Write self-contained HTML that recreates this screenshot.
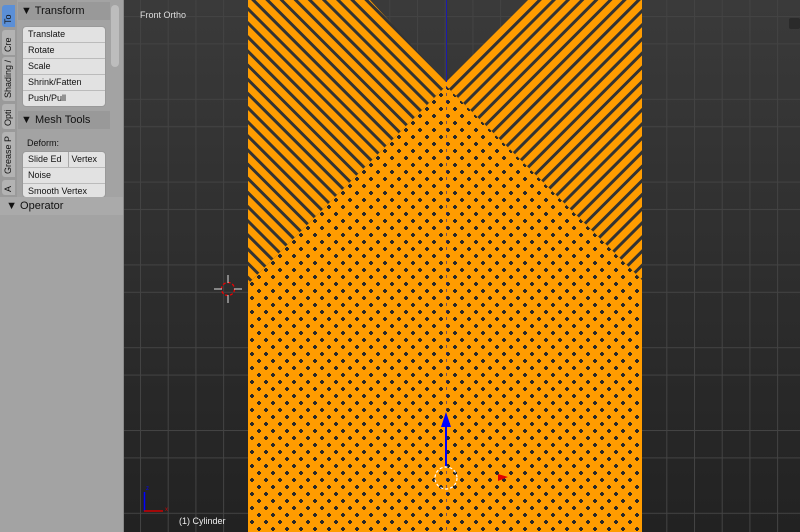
<!DOCTYPE html>
<html><head><meta charset="utf-8"><style>
body{margin:0;width:800px;height:532px;overflow:hidden;background:#333;font-family:"Liberation Sans",sans-serif}
#vp{position:absolute;left:0;top:0}
#panel{position:absolute;left:0;top:0;width:123px;height:532px;background:#a3a3a3;border-right:1px solid #8a8a8a}
.tabs{position:absolute;left:0;top:0;width:17px;height:200px;background:#9a9a9a}
.tab{position:absolute;left:2px;width:13px;background:#b3b3b3;border-radius:3px 0 0 3px;font-size:9px;color:#111;overflow:hidden}
.tab span{position:absolute;bottom:3px;transform:rotate(-90deg);transform-origin:left bottom;white-space:nowrap;left:11px}
.hdr{position:absolute;left:18px;width:92px;height:18px;background:#999;font-size:11px;color:#111;line-height:18px}
.btns{position:absolute;left:22px;width:82px;background:#e2e2e2;border-radius:4px;border:1px solid #999;font-size:9px;color:#111}
.btns div{height:15px;line-height:15px;padding-left:5px;border-bottom:1px solid #bbb}
</style></head><body>
<svg id="vp" width="800" height="532">
<defs>
<linearGradient id="bg" x1="0" y1="0" x2="0" y2="1"><stop offset="0" stop-color="#3a3a3a"/><stop offset="1" stop-color="#222"/></linearGradient>
<pattern id="gh" width="800" height="82.8" patternUnits="userSpaceOnUse" y="16"><rect width="800" height="1" fill="#434343"/><rect y="27.4" width="800" height="1" fill="#434343"/></pattern>
<pattern id="gv" width="27.7" height="600" patternUnits="userSpaceOnUse" x="1.5"><rect width="1" height="600" fill="#434343"/></pattern>
<pattern id="dots" width="14" height="14" patternUnits="userSpaceOnUse" x="446" y="86"><rect width="14" height="14" fill="#ff9c00"/><path d="M1 0h2v1h1v2h-1v1h-2v-1h-1v-2h1z" fill="#2a2a2a"/><path d="M8 7h2v1h1v2h-1v1h-2v-1h-1v-2h1z" fill="#2a2a2a"/></pattern>
<pattern id="sl" width="10" height="10" patternUnits="userSpaceOnUse" patternTransform="rotate(45 446 86)"><rect width="10" height="10" fill="#ff9c00"/><rect y="0" width="10" height="3" fill="#333"/></pattern>
<pattern id="sr" width="10" height="10" patternUnits="userSpaceOnUse" patternTransform="rotate(-45 446 86)"><rect width="10" height="10" fill="#ff9c00"/><rect y="0" width="10" height="3" fill="#333"/></pattern>
</defs>
<rect width="800" height="532" fill="url(#bg)"/>
<rect x="123" width="677" height="532" fill="url(#gh)"/>
<rect x="123" width="677" height="532" fill="url(#gv)"/>
<polygon points="248,0 370,0 446,82 446,86 248,284" fill="url(#sl)"/>
<polygon points="528,0 642,0 642,280 446,86 446,82" fill="url(#sr)"/>
<polygon points="248,284 446,86 642,280 642,532 248,532" fill="url(#dots)"/>
<line x1="446.5" y1="0" x2="446.5" y2="82" stroke="#1a1aaa" stroke-width="1"/>
<line x1="446.5" y1="86" x2="446.5" y2="532" stroke="#1a1a99" stroke-width="1" stroke-dasharray="3,4" opacity=".6"/>
<line x1="446" y1="425" x2="446" y2="466" stroke="#0000ff" stroke-width="2"/>
<polygon points="446,412 441,427 451,427" fill="#0000ff"/>
<circle cx="446" cy="478" r="11" fill="none" stroke="#fff" stroke-width="1.2" stroke-dasharray="3,2"/>
<polygon points="498,474 508,477 498,481" fill="#e00000"/>
<circle cx="228" cy="289" r="6.5" fill="none" stroke="#e00" stroke-width="1.3" stroke-dasharray="3,2"/>
<path d="M214 289h8M234 289h8M228 275v8M228 295v8" stroke="#ddd" stroke-width="1"/>
<line x1="144.5" y1="492" x2="144.5" y2="511" stroke="#00f" stroke-width="1.5"/>
<line x1="144" y1="511" x2="163" y2="511" stroke="#c00" stroke-width="1.5"/>
<text x="146" y="490" font-size="6" fill="#00f">z</text><text x="165" y="511" font-size="6" fill="#c00">x</text>
<text x="140" y="18" font-size="9" fill="#ddd" font-family="Liberation Sans">Front Ortho</text>
<text x="179" y="524" font-size="9" fill="#eee" font-family="Liberation Sans">(1) Cylinder</text>
<rect x="789" y="18" width="11" height="11" rx="2" fill="#2a2a2a"/>
</svg>
<div id="panel">
 <div class="tabs">
  <div class="tab" style="top:5px;height:22px;background:#5b8fd6"><span>To</span></div>
  <div class="tab" style="top:30px;height:25px"><span>Cre</span></div>
  <div class="tab" style="top:57px;height:44px"><span>Shading /</span></div>
  <div class="tab" style="top:104px;height:25px"><span>Opti</span></div>
  <div class="tab" style="top:132px;height:45px"><span>Grease P</span></div>
  <div class="tab" style="top:180px;height:15px"><span>A</span></div>
 </div>
 <div style="position:absolute;left:111px;top:5px;width:8px;height:62px;background:#bdbdbd;border-radius:4px"></div>
 <div class="hdr" style="top:2px">&nbsp;▼ Transform</div>
 <div class="btns" style="top:26px"><div>Translate</div><div>Rotate</div><div>Scale</div><div>Shrink/Fatten</div><div style="border:0">Push/Pull</div></div>
 <div class="hdr" style="top:111px">&nbsp;▼ Mesh Tools</div>
 <div style="position:absolute;left:27px;top:138px;font-size:9px;color:#111">Deform:</div>
 <div class="btns" style="top:151px;height:45px;overflow:hidden"><div><span style="display:inline-block;width:40px;border-right:1px solid #aaa">Slide Ed</span> Vertex</div><div>Noise</div><div>Smooth Vertex</div></div>
 <div style="position:absolute;left:0;top:197px;width:123px;height:18px;background:#aaa;font-size:11px;line-height:18px;color:#111">&nbsp;&nbsp;▼ Operator</div>
</div>
</body></html>
